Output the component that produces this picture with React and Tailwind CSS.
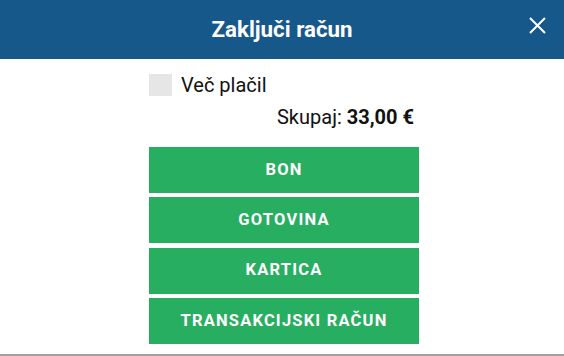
export default function App() {
  const buttons = ["BON", "GOTOVINA", "KARTICA", "TRANSAKCIJSKI RAČUN"];
  return (
    <div
      className="w-[564px] h-[356px] bg-white flex flex-col overflow-hidden border-b-2 border-[#a0a0a0]"
      style={{ fontFamily: "Roboto, 'Liberation Sans', sans-serif" }}
    >
      <div className="relative h-[59px] shrink-0 bg-[#17588b] flex items-center justify-center">
        <h1 className="text-white font-bold text-[22.3px] leading-none">Zaključi račun</h1>
        <button className="absolute right-[18px] top-[17px] w-[17px] h-[17px] flex items-center justify-center">
          <svg width="17" height="17" viewBox="0 0 17 17" fill="none" stroke="white" strokeWidth="2">
            <path d="M1 1 L16 16 M16 1 L1 16" />
          </svg>
        </button>
      </div>
      <div className="pl-[4px] flex-1">
        <div className="w-[270px] mx-auto flex flex-col">
          <label className="mt-[15px] flex items-center h-[22px]">
            <span className="w-[23px] h-[22px] bg-[#e6e6e6] shrink-0" />
            <span className="ml-[9px] text-[20px] leading-none text-[#111]">Več plačil</span>
          </label>
          <div className="mt-[10px] pr-[5px] text-right text-[20px] leading-[22px] text-[#111]">
            Skupaj: <span className="font-bold">33,00 €</span>
          </div>
          <div className="mt-[19px] flex flex-col gap-[4.33px]">
            {buttons.map((b) => (
              <button
                key={b}
                className="h-[46px] w-full bg-[#27ae60] text-white font-bold text-[16.5px] tracking-[1.2px] flex items-center justify-center"
              >
                {b}
              </button>
            ))}
          </div>
        </div>
      </div>
    </div>
  );
}
